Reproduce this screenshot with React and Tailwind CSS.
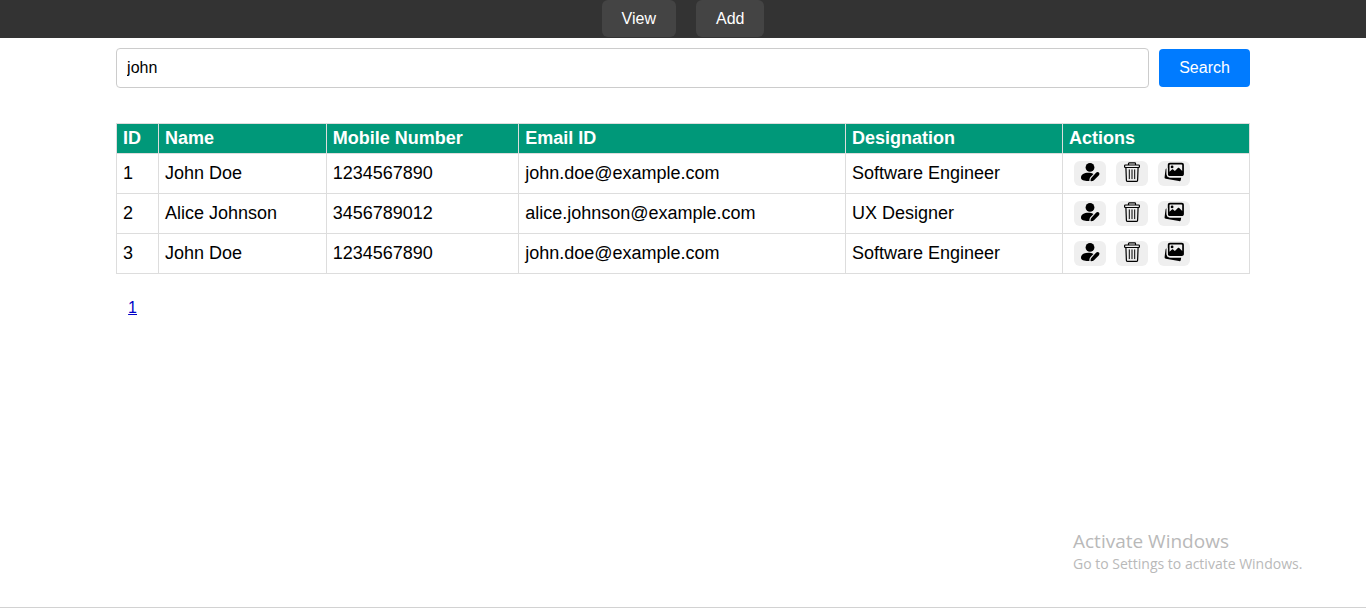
import { useState } from "react";

const rows = [
  { id: 1, name: "John Doe", mobile: "1234567890", email: "john.doe@example.com", role: "Software Engineer" },
  { id: 2, name: "Alice Johnson", mobile: "3456789012", email: "alice.johnson@example.com", role: "UX Designer" },
  { id: 3, name: "John Doe", mobile: "1234567890", email: "john.doe@example.com", role: "Software Engineer" },
];

const columns = [
  { label: "ID", width: "w-[3.7%]" },
  { label: "Name", width: "w-[14.8%]" },
  { label: "Mobile Number", width: "w-[17%]" },
  { label: "Email ID", width: "w-[28.85%]" },
  { label: "Designation", width: "w-[19.15%]" },
  { label: "Actions", width: "w-[16.5%]" },
];

function UserEditIcon() {
  return (
    <svg viewBox="0 0 20 20" className="size-5" fill="currentColor" aria-hidden="true">
      <circle cx="10" cy="5.400" r="4.400" />
      <path d="M1 15.800c0-3.200 3-5 7.400-5 2 0 3.800.4 5.100 1.100l-2.700 2.800c-1 1.100-1.500 2.200-1.400 4.300-.4 0-.6 0-1 0-4.500 0-7.400-1-7.400-3.200z" />
      <path d="M16 10.700c.9-.9 2.100-.9 2.900-.1.800.8.700 1.900-.2 2.900l-4.500 4.500c-.8.800-1.700 1.200-3 1.200-.5 0-.7-.2-.7-.7 0-1.300.4-2.300 1.200-3.100z" />
    </svg>
  );
}

function TrashIcon() {
  return (
    <svg viewBox="0 0 20 20" className="size-5" fill="none" stroke="currentColor" strokeWidth="1.200" strokeLinejoin="round" aria-hidden="true">
      <path d="M6.500 3V1.600c0-.4.300-.7.700-.7h5.600c.4 0 .7.300.7.700V3" />
      <rect x="2.600" y="3" width="14.800" height="2.500" rx="0.700" />
      <path d="M3.900 5.500l.5 12.800c.1.700.5 1.100 1.200 1.100h8.800c.7 0 1.100-.4 1.200-1.100l.5-12.800" />
      <path d="M7.300 7.800v8.900M10 7.800v8.900M12.700 7.800v8.900" strokeLinecap="round" strokeWidth="1" />
    </svg>
  );
}

function ImagesIcon() {
  return (
    <svg viewBox="0 0 20 20" className="size-5" fill="currentColor" aria-hidden="true">
      <path d="M2.600 6.200v5.800c0 2.300 1.300 3.600 3.600 3.600h11l-.4 2.300c-.2 1-.9 1.400-1.900 1.200L1.800 16.700c-1-.2-1.400-.8-1.200-1.800l1-7.600c.1-.6.400-.9 1-1.100z" />
      <path fillRule="evenodd" d="M5.900.8h11.900c1.300 0 2.100.8 2.100 2.100v9c0 1.300-.8 2.100-2.100 2.100H5.900c-1.300 0-2.100-.8-2.100-2.100v-9C3.800 1.600 4.600.8 5.900.8zM5.500 3v6.700l2.400-2.200c.4-.4.800-.4 1.200 0l1.800 1.600 3-3.100c.4-.4.900-.4 1.300 0l3 2.900V3c0-.4-.2-.6-.6-.6H6.100c-.4 0-.6.200-.6.600z" />
      <circle cx="8.100" cy="4.900" r="1.400" />
      <path d="M3.200 6v6c0 1.900 1.100 3 3 3h11.600" fill="none" stroke="#efefef" strokeWidth="1" />
    </svg>
  );
}

const actions = [
  { label: "Edit", Icon: UserEditIcon },
  { label: "Delete", Icon: TrashIcon },
  { label: "Images", Icon: ImagesIcon },
];

export default function App() {
  const [query, setQuery] = useState("john");

  return (
    <div className="relative flex min-h-screen flex-col border-b border-[#d2d2d2] bg-white font-['Liberation_Sans',Arial,sans-serif] text-black">
      <nav className="flex justify-center gap-5 bg-[#333] pb-px">
        <button type="button" className="h-[37px] rounded-md bg-[#444] px-5 text-base text-white">View</button>
        <button type="button" className="h-[37px] rounded-md bg-[#444] px-5 text-base text-white">Add</button>
      </nav>

      <main className="mx-auto w-[83%] pt-2.5">
        <form className="flex items-center gap-2.5" onSubmit={(e) => e.preventDefault()}>
          <input
            type="text"
            aria-label="Search employees"
            value={query}
            onChange={(e) => setQuery(e.target.value)}
            className="h-10 min-w-0 flex-1 rounded border border-[#ccc] px-2.5 text-base outline-none"
          />
          <button type="submit" className="h-[38px] rounded bg-[#007bff] px-5 text-base text-white">Search</button>
        </form>

        <table className="mt-[35px] w-full table-fixed border-collapse text-left text-lg leading-6">
          <thead>
            <tr className="h-[30px] bg-[#009879] text-white">
              {columns.map((c) => (
                <th key={c.label} scope="col" className={`${c.width} border border-[#ddd] px-1.5 pt-0 pb-0.5 font-bold`}>
                  {c.label}
                </th>
              ))}
            </tr>
          </thead>
          <tbody>
            {rows.map((r) => (
              <tr key={r.id} className="h-10">
                <td className="border border-[#ddd] px-1.5 pb-0.5">{r.id}</td>
                <td className="border border-[#ddd] px-1.5 pb-0.5">{r.name}</td>
                <td className="border border-[#ddd] px-1.5 pb-0.5">{r.mobile}</td>
                <td className="border border-[#ddd] px-1.5 pb-0.5">{r.email}</td>
                <td className="border border-[#ddd] px-1.5 pb-0.5">{r.role}</td>
                <td className="border border-[#ddd] px-1.5">
                  <div className="flex gap-2.5 pl-[5px]">
                    {actions.map(({ label, Icon }) => (
                      <button
                        key={label}
                        type="button"
                        aria-label={`${label} ${r.name}`}
                        className="flex h-[25px] w-8 items-start justify-center rounded-md bg-[#efefef] pt-px"
                      >
                        <Icon />
                      </button>
                    ))}
                  </div>
                </td>
              </tr>
            ))}
          </tbody>
        </table>

        <div className="mt-[22px] px-3">
          <a href="#page-1" className="text-base text-[#0000c8] underline">1</a>
        </div>
      </main>

      <aside className="pointer-events-none absolute right-14 bottom-[33px] w-[237px] font-['Open_Sans','Noto_Sans',sans-serif] whitespace-nowrap text-[#b9b9b9]">
        <p className="text-[19px] leading-[26px]">Activate Windows</p>
        <p className="text-sm leading-5">Go to Settings to activate Windows.</p>
      </aside>
    </div>
  );
}
